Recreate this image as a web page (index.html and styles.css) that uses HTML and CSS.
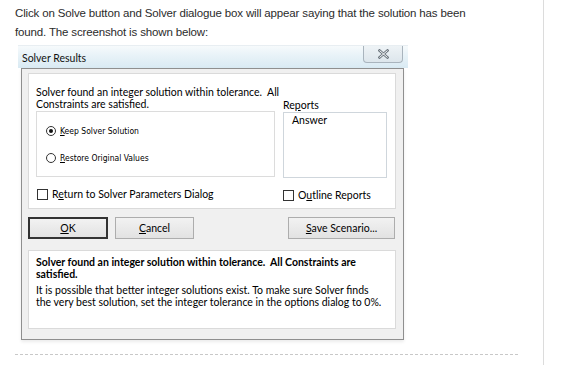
FILE: index.html
```html
<!DOCTYPE html>
<html>
<head>
<meta charset="utf-8">
<link rel="stylesheet" href="styles.css">
</head>
<body>
<div class="page">
  <div class="content">
    <p class="intro">Click on Solve button and Solver dialogue box will appear saying that the solution has been found. The screenshot is shown below:</p>
    <div class="dialog">
      <div class="titlebar">
        <span class="title">Solver Results</span>
        <span class="close"><svg width="11" height="10" viewBox="0 0 11 10"><path d="M1.5 1.5 L9.5 8.5 M9.5 1.5 L1.5 8.5" stroke="#6f7880" stroke-width="2.6" fill="none" stroke-linecap="square"/><path d="M1.5 1.5 L9.5 8.5 M9.5 1.5 L1.5 8.5" stroke="#f6f8fa" stroke-width="1" fill="none"/></svg></span>
      </div>
      <div class="frame">
        <div class="panel top">
          <div class="col-left">
            <div class="msg">Solver found an integer solution within tolerance.&nbsp; All<br>Constraints are satisfied.</div>
            <div class="radiobox">
              <label class="radio"><span class="rb checked"></span><span><u>K</u>eep Solver Solution</span></label>
              <label class="radio"><span class="rb"></span><span><u>R</u>estore Original Values</span></label>
            </div>
            <label class="check"><span class="cb"></span><span>R<u>e</u>turn to Solver Parameters Dialog</span></label>
          </div>
          <div class="col-right">
            <div class="rlabel">Re<u>p</u>orts</div>
            <div class="listbox">Answer</div>
            <label class="check"><span class="cb"></span><span>O<u>u</u>tline Reports</span></label>
          </div>
        </div>
        <div class="buttons">
          <span class="btn default"><u>O</u>K</span>
          <span class="btn cancel"><u>C</u>ancel</span>
          <span class="btn save"><u>S</u>ave Scenario...</span>
        </div>
        <div class="panel bottom">
          <div class="bold">Solver found an integer solution within tolerance.&nbsp; All Constraints are<br>satisfied.</div>
          <div class="note">It is possible that better integer solutions exist. To make sure Solver finds<br>the very best solution, set the integer tolerance in the options dialog to 0%.</div>
        </div>
      </div>
    </div>
    <div class="dashed"></div>
  </div>
</div>
</body>
</html>
```
FILE: styles.css
```css
html, body { margin: 0; padding: 0; background: #fff; }
.page { display: flex; height: 365px; overflow: hidden; }
.content { width: 543px; border-right: 1px solid #dcdcdc; height: 365px; }
.intro {
  margin: 4px 0 0 15px;
  width: 458px;
  font-family: "Liberation Sans", Arial, sans-serif;
  font-size: 11.5px;
  letter-spacing: -0.15px;
  line-height: 19px;
  color: #2b2b2b;
}
.dialog { margin: 3px 0 0 18px; width: 390px; font-family: Lato, "Liberation Sans", sans-serif; color: #000; }
.titlebar {
  height: 22px;
  display: flex;
  align-items: flex-start;
  padding: 0 5px 0 4px;
  background: linear-gradient(180deg, #f6fafc 0%, #e9f3f8 40%, #d9eaf3 100%);
  border-top: 1px solid #e8eef2;
}
.title { font-size: 10.5px; line-height: 12px; margin-top: 6px; color: #111; }
.close {
  margin-left: auto;
  width: 38px; height: 16px;
  border: 1px solid #a9b4bd; border-top: none;
  border-radius: 0 0 4px 4px;
  background: linear-gradient(180deg, #eef3f6, #dde6ec);
  display: flex; align-items: center; justify-content: center;
}
.frame {
  margin: 0 4px 0 3px;
  border: 1px solid #8f8f8f;
  background: #f0f0f0;
  padding: 4px 7px 10px 6px;
  box-shadow: 0 2px 3px rgba(0,0,0,0.08);
  font-size: 10.5px;
}
.panel { background: #fff; border: 1px solid #dadada; }
.top { display: flex; gap: 8px; padding: 12px 7px 0 7px; height: 136px; box-sizing: border-box; }
.col-left { width: 239px; display: flex; flex-direction: column; }
.col-right { width: 104px; display: flex; flex-direction: column; padding-top: 13px; }
.msg { line-height: 12px; height: 25px; white-space: nowrap; }
.radiobox { margin-top: 0; height: 66px; border: 1px solid #dcdcdc; padding: 12px 0 0 9px; display: flex; flex-direction: column; gap: 14px; box-sizing: border-box; }
.radio { display: flex; align-items: center; gap: 4px; font-size: 8.5px; font-family: "DejaVu Sans Condensed", "Liberation Sans", sans-serif; height: 13px; }
.rb { width: 8px; height: 8px; border: 1px solid #333; border-radius: 50%; box-sizing: content-box; position: relative; }
.rb.checked::after { content: ""; position: absolute; left: 2px; top: 2px; width: 4px; height: 4px; border-radius: 50%; background: #111; }
.check { display: flex; align-items: center; gap: 4px; line-height: 12px; margin-top: 11px; }
.cb { width: 9px; height: 9px; border: 1px solid #333; background: #fff; }
.col-left .check { margin-left: 1px; }
.rlabel { line-height: 12px; }
.listbox { margin-top: 1px; height: 66px; box-sizing: border-box; border: 1px solid #cfd6dc; padding: 1px 0 0 8px; line-height: 12px; }
.buttons { display: flex; margin-top: 8px; height: 22px; }
.btn {
  display: flex; align-items: center; justify-content: center;
  box-sizing: border-box; height: 22px;
  border: 1px solid #adadad;
  background: linear-gradient(180deg, #f2f2f2, #e2e2e2);
}
.btn.default { width: 80px; border: 2px solid #333; }
.btn.cancel { width: 79px; margin-left: 7px; }
.btn.save { width: 107px; margin-left: auto; margin-right: 1px; }
.bottom { margin-top: 11px; height: 79px; box-sizing: border-box; padding: 5px 7px; line-height: 12px; white-space: nowrap; }
.bold { font-weight: bold; }
.note { margin-top: 4px; }
.dashed { margin: 14px 0 0 15px; width: 503px; border-top: 1px dashed #c8c8c8; }
```
